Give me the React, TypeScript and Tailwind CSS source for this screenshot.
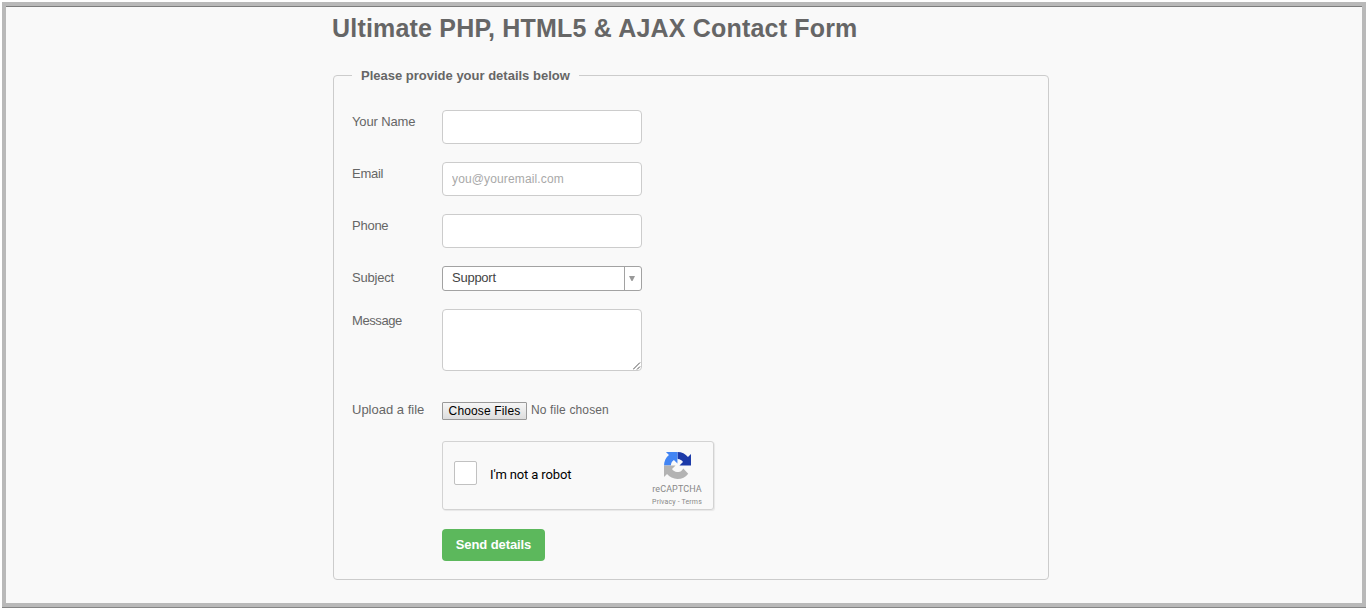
import React from "react";

function Row({
  label,
  htmlFor,
  className,
  labelClass,
  children,
}: {
  label: string;
  htmlFor: string;
  className: string;
  labelClass: string;
  children: React.ReactNode;
}) {
  return (
    <div className={`flex items-start ${className}`}>
      <label
        htmlFor={htmlFor}
        className={`mt-[3px] w-[90px] shrink-0 whitespace-nowrap text-[13px] leading-[18px] ${labelClass}`}
      >
        {label}
      </label>
      {children}
    </div>
  );
}

const inputClass =
  "block h-[34px] w-[200px] rounded-[4px] border border-[#ccc] bg-white px-[9px] text-[12px] tracking-[0.14px] placeholder-[#a9a9a9] outline-none";

function CaptchaLogo() {
  return (
    <svg width="27" height="27" viewBox="0 0 64 64" className="block">
      <path
        fill="#1c3aa9"
        d="M64 31.955a33 33 0 0 0-.033-1.37V4.687l-7.16 7.16C50.948 4.674 42.033.093 32.05.093V16.2c.485 0 .86.057 1.135.163 4.976.393 9.288 3.14 11.828 7.124l-8.307 8.307L64 31.953"
      />
      <path
        fill="#4285f4"
        d="M31.862.094a33 33 0 0 0-1.37.033H4.594l7.16 7.16C4.58 13.147 0 22.06 0 32.046h16.26c0-.485.057-.86.163-1.135.393-4.976 3.14-9.288 7.124-11.828l8.307 8.307L31.86.095"
      />
      <path
        fill="#b3b3b3"
        d="M.001 32.045a33 33 0 0 0 .033 1.37v25.898l7.16-7.16c5.86 7.173 14.774 11.754 24.76 11.754 10.39 0 19.622-4.96 25.458-12.64l-11.736-11.86a15.55 15.55 0 0 1-4.754 5.334c-2.05 1.6-4.952 2.906-8.968 2.906-.485 0-.86-.057-1.135-.163-4.976-.393-9.288-3.14-11.828-7.124l8.307-8.307c-10.522.04-22.4.066-27.295-.005"
      />
    </svg>
  );
}

export default function App() {
  return (
    <div className="h-[609px] overflow-hidden bg-white pl-[2px] pt-[2px] font-['Liberation_Sans',Arial,sans-serif] text-[#666]">
      <div className="h-[606px] w-[1364px] border-b border-[#858585] ">
        <div className="h-[605px] border-4 border-[#b9b9b9] bg-[#f9f9f9]">
          <div className="h-px bg-[#7d7d7d]" />
          <main className="ml-[327px] w-[716px]">
            <h1 className="-ml-px pt-[4px] text-[25px] font-bold leading-[34px] tracking-[0.19px] whitespace-nowrap">
              Ultimate PHP, HTML5 &amp; AJAX Contact Form
            </h1>
            <form onSubmit={(e) => e.preventDefault()}>
              <fieldset className="mt-[21px] h-[514px] rounded-[4px] border border-[#ccc] px-[18px]">
                <legend className="h-[18px] w-[227px] whitespace-nowrap px-[9px] text-[13px] font-bold leading-[20px]">
                  Please provide your details below
                </legend>
                <Row label="Your Name" htmlFor="name" className="mt-[26px] h-[52px]" labelClass="tracking-[-0.13px]">
                  <input id="name" className={inputClass} />
                </Row>
                <Row label="Email" htmlFor="email" className="h-[52px]" labelClass="tracking-[-0.25px]">
                  <input id="email" placeholder="you@youremail.com" className={inputClass} />
                </Row>
                <Row label="Phone" htmlFor="phone" className="h-[52px]" labelClass="tracking-[-0.25px]">
                  <input id="phone" className={inputClass} />
                </Row>
                <Row label="Subject" htmlFor="subject" className="h-[43px]" labelClass="tracking-[-0.2px]">
                  <button
                    id="subject"
                    type="button"
                    className="flex h-[25px] w-[200px] items-stretch rounded-[3px] border border-[#a2a2a2] bg-white text-left text-[13px] text-[#444]"
                  >
                    <span className="grow pl-[9px] leading-[22px] tracking-[-0.25px]">Support</span>
                    <span className="flex w-[17px] items-center justify-center border-l border-[#a2a2a2] pr-[2px]">
                      <svg width="6" height="5" viewBox="0 0 6 5">
                        <path d="M0 0h6L3.5 5h-1z" fill="#999" />
                      </svg>
                    </span>
                  </button>
                </Row>
                <Row label="Message" htmlFor="message" className="h-[89px]" labelClass="tracking-[-0.4px]">
                  <div className="relative">
                    <textarea
                      id="message"
                      className="block h-[62px] w-[200px] resize-none rounded-[4px] border border-[#ccc] bg-white p-2 outline-none"
                    />
                    <svg
                      className="absolute bottom-[1px] right-[1px]"
                      width="8"
                      height="8"
                      viewBox="0 0 8 8"
                    >
                      <path d="M0 7.5l7-7M4 7.5l3-3" stroke="#555" strokeWidth="1" />
                    </svg>
                  </div>
                </Row>
                <Row label="Upload a file" htmlFor="upload" className="h-[43px]" labelClass="tracking-normal">
                  <button
                    id="upload"
                    type="button"
                    className="mt-[4px] h-[18px] w-[85px] whitespace-nowrap rounded-[1px] border border-[#999] bg-linear-to-b from-[#f6f6f6] to-[#dddddd] text-[12px] leading-[16px] tracking-[0.15px] text-black"
                  >
                    Choose Files
                  </button>
                  <span className="ml-[4px] mt-[3px] text-[12px] leading-[18px] tracking-[0.13px]">
                    No file chosen
                  </span>
                </Row>
                <div className="ml-[90px] flex h-[69px] w-[272px] rounded-[3px] border border-[#d3d3d3] bg-[#f9f9f9] font-[Roboto,sans-serif] shadow-[1px_1px_1px_rgba(0,0,0,0.07)]">
                  <div className="ml-[11px] mt-[19px] h-[24px] w-[23px] rounded-[2px] border border-[#c1c1c1] bg-white" />
                  <span className="ml-[13px] mt-[23px] text-[13px] leading-[20px] tracking-[-0.13px] text-black whitespace-nowrap">
                    I'm not a robot
                  </span>
                  <div className="ml-auto mr-[6px] mt-[10px] flex w-[60px] flex-col items-center text-[#888]">
                    <CaptchaLogo />
                    <span className="mt-[4px] whitespace-nowrap text-[9px] leading-[12px] tracking-[0.1px]">reCAPTCHA</span>
                    <span className="mt-px whitespace-nowrap text-[7px] leading-[12px] tracking-[0.15px]">
                      Privacy - Terms
                    </span>
                  </div>
                </div>
                <button className="ml-[90px] mt-[19px] block h-[32px] w-[103px] whitespace-nowrap rounded-[4px] bg-[#5cb85c] text-[13px] font-bold leading-[32px] tracking-[-0.1px] text-white">
                  Send details
                </button>
              </fieldset>
            </form>
          </main>
        </div>
      </div>
    </div>
  );
}
